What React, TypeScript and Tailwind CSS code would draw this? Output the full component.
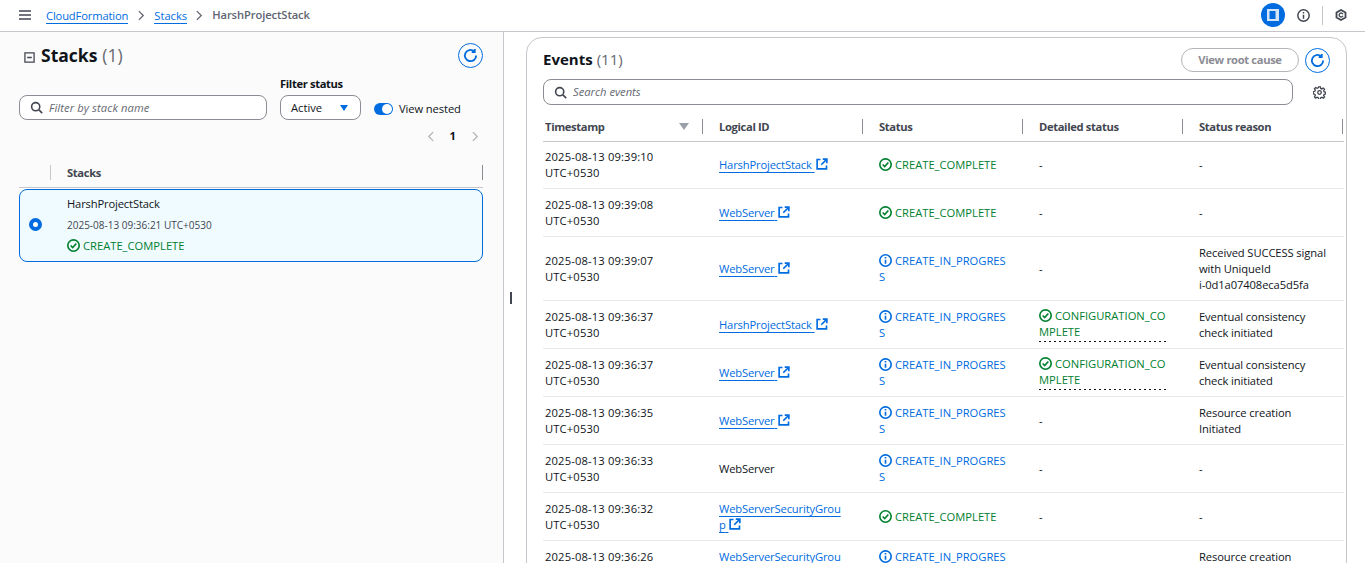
import React from "react";

const CheckIcon = ({ className = "" }: { className?: string }) => (
  <svg viewBox="0 0 16 16" className={`inline-block w-[13px] h-[13px] shrink-0 ${className}`} fill="none" stroke="currentColor" strokeWidth="2">
    <circle cx="8" cy="8" r="7" />
    <path d="M4.5 8l2.5 2.5L11.5 5.5" />
  </svg>
);
const InfoIcon = ({ className = "" }: { className?: string }) => (
  <svg viewBox="0 0 16 16" className={`inline-block w-[13px] h-[13px] shrink-0 ${className}`} fill="none" stroke="currentColor" strokeWidth="2">
    <circle cx="8" cy="8" r="7" />
    <path d="M8 7v5M8 3.6v2" />
  </svg>
);
const ExtIcon = () => (
  <svg viewBox="0 0 16 16" className="inline-block w-[12px] h-[12px] ml-[1px] align-[-1px]" fill="none" stroke="#006ce0" strokeWidth="2.2">
    <path d="M6 2H1.5v12.5H14V10" />
    <path d="M9 1.5h5.5V7M14.5 1.5L7 9" />
  </svg>
);
const Refresh = ({ cls }: { cls: string }) => (
  <div className={`w-[25px] h-[25px] rounded-full border border-[#006ce0] flex items-center justify-center ${cls}`}>
    <svg viewBox="0 0 16 16" className="w-[15px] h-[15px]" fill="none" stroke="#006ce0" strokeWidth="2">
      <path d="M14 8a6 6 0 1 1-2.2-4.6" />
      <path d="M12.5 1v3.2H9.3" />
    </svg>
  </div>
);
const SearchIcon = () => (
  <svg viewBox="0 0 16 16" className="w-[13px] h-[13px] shrink-0" fill="none" stroke="#424650" strokeWidth="2">
    <circle cx="7" cy="7" r="5" />
    <path d="M11 11l4 4" />
  </svg>
);

type Kind = "ok" | "prog";
const Status = ({ kind, text }: { kind: Kind; text: string }) =>
  kind === "ok" ? (
    <span className="text-[#00802f]"><CheckIcon className="mr-[3px] align-[-2px]" />{text}</span>
  ) : (
    <span className="text-[#006ce0]"><InfoIcon className="mr-[3px] align-[-2px]" />{text}</span>
  );

type Row = { t: string; id: string; link: boolean; s: Kind; d?: boolean; r: string[]; h: string };
const P = "CREATE_IN_PROGRESS";
const C = "CREATE_COMPLETE";
const rows: Row[] = [
  { t: "2025-08-13 09:39:10", id: "HarshProjectStack", link: true, s: "ok", r: ["-"], h: "h-[47px]" },
  { t: "2025-08-13 09:39:08", id: "WebServer", link: true, s: "ok", r: ["-"], h: "h-[48px]" },
  { t: "2025-08-13 09:39:07", id: "WebServer", link: true, s: "prog", r: ["Received SUCCESS signal", "with UniqueId", "i-0d1a07408eca5d5fa"], h: "h-[64px]" },
  { t: "2025-08-13 09:36:37", id: "HarshProjectStack", link: true, s: "prog", d: true, r: ["Eventual consistency", "check initiated"], h: "h-[48px]" },
  { t: "2025-08-13 09:36:37", id: "WebServer", link: true, s: "prog", d: true, r: ["Eventual consistency", "check initiated"], h: "h-[48px]" },
  { t: "2025-08-13 09:36:35", id: "WebServer", link: true, s: "prog", r: ["Resource creation", "Initiated"], h: "h-[48px]" },
  { t: "2025-08-13 09:36:33", id: "WebServer", link: false, s: "prog", r: ["-"], h: "h-[48px]" },
  { t: "2025-08-13 09:36:32", id: "WebServerSecurityGroup", link: true, s: "ok", r: ["-"], h: "h-[48px]" },
  { t: "2025-08-13 09:36:26", id: "WebServerSecurityGroup", link: true, s: "prog", r: ["Resource creation", "Initiated"], h: "h-[48px]" },
];

const cols = "grid grid-cols-[160px_160px_160px_160px_160px]";

const Header = ({ label, sort, first }: { label: string; sort?: boolean; first?: boolean }) => (
  <div className={`flex items-center justify-between h-[15px] border-r border-[#8c8c94] font-bold tracking-[-0.35px] text-[#424650] ${first ? "pl-[2px] pr-[13px]" : "pl-[16px]"}`}>
    <span>{label}</span>
    {sort && <span className="w-0 h-0 border-l-[5px] border-r-[5px] border-t-[7px] border-l-transparent border-r-transparent border-t-[#9ba0a8]" />}
  </div>
);

export default function App() {
  return (
    <div className="w-[1365px] h-[563px] overflow-hidden bg-white text-[11.2px] leading-[16px] text-[#0f141a] flex flex-col font-['Open_Sans','Noto_Sans',sans-serif]">
      {/* Top bar */}
      <div className="h-[32px] shrink-0 border-b border-[#c6c6cd] flex items-center pl-[19px] pr-[18px] pb-[1px]">
        <svg viewBox="0 0 12 10" className="w-[12px] h-[10px] mr-[15px]" stroke="#424650" strokeWidth="1.6">
          <path d="M0 1h12M0 5h12M0 9h12" />
        </svg>
        <a className="text-[#006ce0] border-b border-[#006ce0] leading-[15px] mt-[1px] tracking-[-0.15px]">CloudFormation</a>
        <svg viewBox="0 0 8 12" className="w-[7px] h-[11px] mx-[9.5px]" fill="none" stroke="#656871" strokeWidth="1.5"><path d="M1 1l5 5-5 5" /></svg>
        <a className="text-[#006ce0] border-b border-[#006ce0] leading-[15px] mt-[1px]">Stacks</a>
        <svg viewBox="0 0 8 12" className="w-[7px] h-[11px] ml-[9px] mr-[9px]" fill="none" stroke="#656871" strokeWidth="1.5"><path d="M1 1l5 5-5 5" /></svg>
        <span className="font-semibold text-[#5f6570] tracking-[-0.1px]">HarshProjectStack</span>
        <div className="flex-1" />
        <div className="w-[24px] h-[24px] rounded-full bg-[#006ce0] flex items-center justify-center mr-[12px]">
          <svg viewBox="0 0 12 12" className="w-[12px] h-[12px]"><path fill="#d3e4f8" d="M0 0h12v12H0z" /><path fill="#006ce0" d="M2.5 2h6v8h-6z" /></svg>
        </div>
        <svg viewBox="0 0 16 16" className="w-[13px] h-[13px] mr-[12px]" fill="none" stroke="#424650" strokeWidth="1.8"><circle cx="8" cy="8" r="7" /><path d="M8 7v5M8 3.6v2" /></svg>
        <div className="w-px h-[19px] bg-[#c6c6cd] mr-[12px]" />
        <svg viewBox="0 0 16 16" className="w-[12px] h-[12px]" fill="none" stroke="#424650" strokeWidth="2.4"><path d="M8 1.4l6 3.3v6.6l-6 3.3-6-3.3V4.7z" /><path d="M10.5 7A2.6 2.6 0 1 0 10.5 9" strokeWidth="1.8" /></svg>
      </div>

      <div className="flex flex-1 min-h-0">
        {/* Left panel */}
        <div className="w-[504px] shrink-0 bg-[#fbfbfb] border-r border-[#c6c6cd] pl-[19px] pr-[20px] relative">
          <div className="flex items-center justify-between h-[47px]">
            <div className="flex items-center pl-[5px] mt-[-2px]">
              <svg viewBox="0 0 12 12" className="w-[11px] h-[11px] mr-[6px] mt-[5px]" fill="none" stroke="#424650" strokeWidth="1.4"><path d="M1 1h10v10H1zM3.5 6h5" /></svg>
              <span className="text-[17.5px] leading-[24px] font-bold">Stacks</span>
              <span className="text-[17.5px] leading-[24px] text-[#656871] ml-[5px]">(1)</span>
            </div>
            <Refresh cls="bg-transparent" />
          </div>
          <div className="flex items-end mt-[-3px]">
            <div className="w-[248px] h-[25px] rounded-[8px] border border-[#8c8c94] bg-white flex items-center pl-[10px]">
              <SearchIcon />
              <span className="italic text-[#656871] ml-[6px] tracking-[0.1px]">Filter by stack name</span>
            </div>
            <div className="ml-[13px]">
              <div className="font-bold mb-[3px] tracking-[-0.35px]">Filter status</div>
              <div className="w-[81px] h-[25px] rounded-[8px] border border-[#8c8c94] bg-white flex items-center justify-between pl-[10px] pr-[12px]">
                <span>Active</span>
                <span className="w-0 h-0 border-l-[4px] border-r-[4px] border-t-[6px] border-l-transparent border-r-transparent border-t-[#006ce0]" />
              </div>
            </div>
            <div className="flex items-center ml-[13px] mb-[3px]">
              <div className="w-[19px] h-[12px] rounded-full bg-[#006ce0] flex justify-end items-center pr-[1px]"><div className="w-[10px] h-[10px] rounded-full bg-white" /></div>
              <span className="ml-[6px] tracking-[-0.1px]">View nested</span>
            </div>
          </div>
          <div className="flex items-center justify-end mt-[8px] pr-[4px]">
            <svg viewBox="0 0 8 12" className="w-[7px] h-[11px]" fill="none" stroke="#b4b4bb" strokeWidth="1.5"><path d="M7 1L2 6l5 5" /></svg>
            <span className="font-bold mx-[16px] text-[#0f141a]">1</span>
            <svg viewBox="0 0 8 12" className="w-[7px] h-[11px]" fill="none" stroke="#b4b4bb" strokeWidth="1.5"><path d="M1 1l5 5-5 5" /></svg>
          </div>
          <div className="mt-[21px] flex items-center h-[15px] relative">
            <div className="w-[32px] h-full border-r border-[#c6c6cd]" />
            <span className="ml-[16px] font-bold text-[#424650] flex-1 tracking-[-0.35px]">Stacks</span>
            <div className="w-px h-full bg-[#8c8c94]" />
          </div>
          <div className="h-px bg-[#c6c6cd] mt-[7px]" />
          <div className="h-[73px] mt-[1px] pb-[2px] rounded-[8px] border border-[#006ce0] bg-[#f0fbff] flex items-center">
            <div className="w-[31px] flex justify-center">
              <div className="w-[13px] h-[13px] rounded-full border-[4px] border-[#006ce0] bg-white" />
            </div>
            <div className="pl-[16px]">
              <div className="tracking-[-0.15px]">HarshProjectStack</div>
              <div className="text-[10px] text-[#424650] mt-[5px]">2025-08-13 09:36:21 UTC+0530</div>
              <div className="mt-[5px]"><Status kind="ok" text={C} /></div>
            </div>
          </div>
          {/* Split handle */}
          <div className="absolute left-[510px] top-[260px] w-[2px] h-[12px] bg-[#424650]" />
        </div>

        {/* Right panel */}
        <div className="flex-1 min-w-0 pl-[22px] pr-[19px] pt-[5px]">
          <div className="h-[600px] border border-[#c6c6cd] rounded-t-[16px] pl-[16px] w-[821px]">
            <div className="flex items-center justify-between h-[44px] pr-[16px]">
              <div>
                <span className="text-[15px] font-bold">Events</span>
                <span className="text-[15px] text-[#656871] ml-[4px]">(11)</span>
              </div>
              <div className="flex items-center">
                <div className="w-[118px] h-[24px] rounded-full border border-[#b4b4bb] flex items-center justify-center font-bold tracking-[-0.35px] text-[#8c8c94]">View root cause</div>
                <Refresh cls="ml-[6px]" />
              </div>
            </div>
            <div className="flex items-center mt-[-3px]">
              <div className="w-[750px] h-[26px] rounded-[8px] border border-[#8c8c94] flex items-center pl-[10px]">
                <SearchIcon />
                <span className="italic text-[#656871] ml-[6px]">Search events</span>
              </div>
              <svg viewBox="0 0 16 16" className="w-[13px] h-[13px] ml-[20px]" fill="none" stroke="#424650" strokeWidth="1.6">
                <circle cx="8" cy="8" r="2.2" />
                <path d="M6.9 1h2.2l.4 2 1.4.6 1.8-1.1 1.5 1.5-1.1 1.8.6 1.4 2 .4v2.2l-2 .4-.6 1.4 1.1 1.8-1.5 1.5-1.8-1.1-1.4.6-.4 2H6.9l-.4-2-1.4-.6-1.8 1.1-1.5-1.5 1.1-1.8-.6-1.4-2-.4V6.9l2-.4.6-1.4-1.1-1.8L3.3 1.8l1.8 1.1 1.4-.6z" />
              </svg>
            </div>
            <div className="w-[801px] mt-[14px]">
              <div className={`${cols} border-b border-[#c6c6cd] pb-[7px]`}>
                <Header label="Timestamp" sort first />
                <Header label="Logical ID" />
                <Header label="Status" />
                <Header label="Detailed status" />
                <Header label="Status reason" />
              </div>
              {rows.map((row, i) => (
                <div key={i} className={`${cols} ${row.h} border-b border-[#e8e8ea] items-center`}>
                  <div className="pl-[2px] tracking-[0.15px]">{row.t}<br />UTC+0530</div>
                  <div className="pl-[16px] pr-[20px] break-all tracking-[-0.15px]">
                    {row.link ? (
                      <><a className="text-[#006ce0] underline underline-offset-[3px] decoration-[#006ce0]">{row.id}{"\u00a0"}</a><ExtIcon /></>
                    ) : row.id}
                  </div>
                  <div className="pl-[16px] pr-[16px] break-all"><Status kind={row.s} text={row.s === "ok" ? C : P} /></div>
                  <div className={`pl-[16px] pr-[16px] break-all ${row.d && i === 4 ? "pt-[1px]" : ""}`}>
                    {row.d ? (
                      <div className="w-[128px]">
                        <Status kind="ok" text="CONFIGURATION_COMPLETE" />
                        <div className="h-px mt-[1px] bg-[repeating-linear-gradient(90deg,#0f141a_0_2px,transparent_2px_5px)]" />
                      </div>
                    ) : "-"}
                  </div>
                  <div className="pl-[16px] tracking-[-0.1px]">{row.r.map((l, j) => <div key={j}>{l}</div>)}</div>
                </div>
              ))}
            </div>
          </div>
        </div>
      </div>
    </div>
  );
}
